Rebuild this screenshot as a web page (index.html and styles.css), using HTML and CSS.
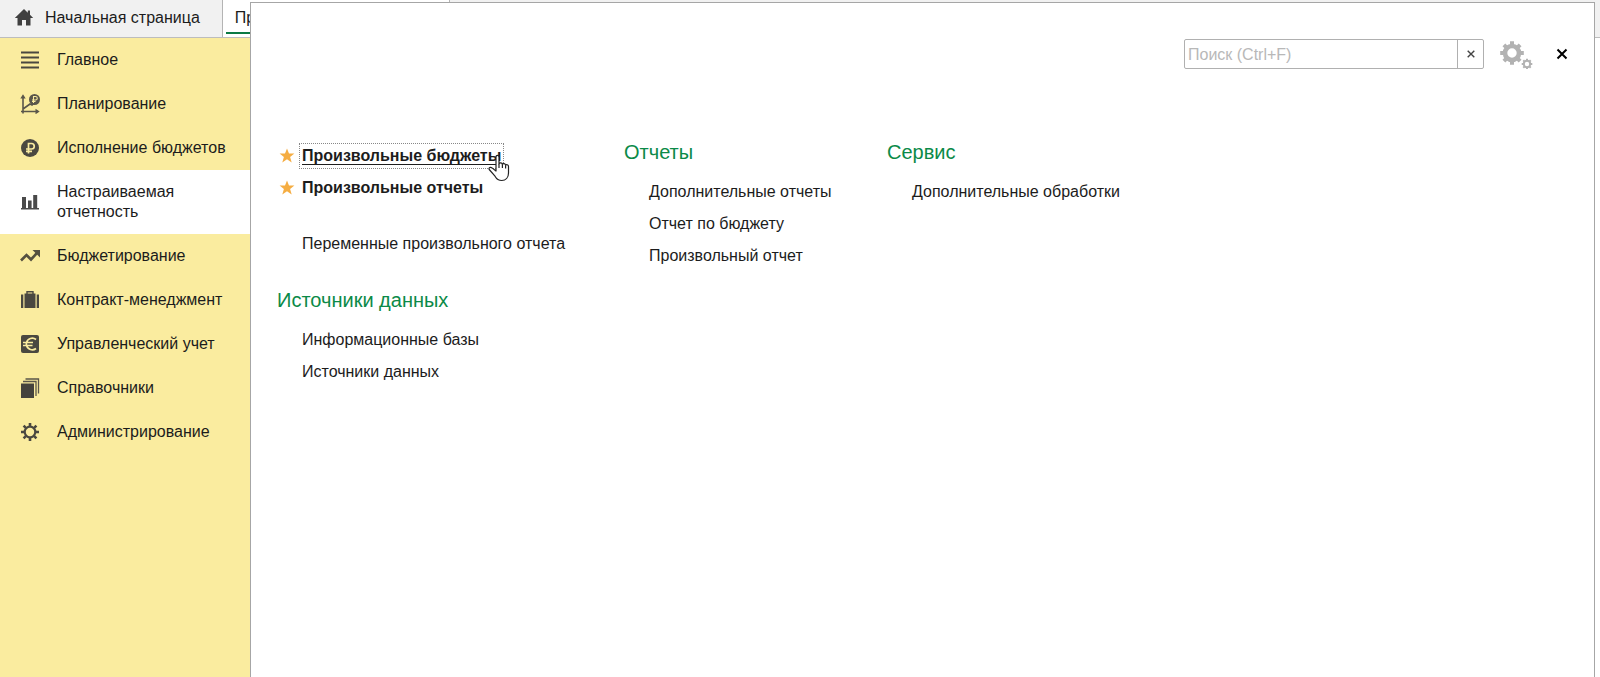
FILE: index.html
```html
<!DOCTYPE html>
<html lang="ru">
<head>
<meta charset="utf-8">
<title>Настраиваемая отчетность</title>
<link rel="stylesheet" href="styles.css">
</head>
<body>
<div class="app">
  <header class="tabs">
    <button class="tab tab-home" type="button">
      <svg class="home-icon" width="20" height="18" viewBox="0 0 20 18" fill="#404040"><path d="M10 0 .8 9h2.700v7.500h4.500V11h4v5.500h4.500V9h2.700L16 5.800V1.500h-2.200v2.300z"/></svg>
      Начальная страница
    </button>
    <button class="tab tab-current" type="button">Пр</button>
  </header>

  <div class="body">
    <nav class="sidebar">
      <a class="section" href="#">
        <svg class="icon" viewBox="0 0 20 20" stroke="#4a4840" stroke-width="2"><path d="M1 2.500h18M1 7.500h18M1 12.500h18M1 17.500h18"/></svg>
        <span>Главное</span>
      </a>
      <a class="section" href="#">
        <svg class="icon" viewBox="0 0 20 20" fill="none" stroke="#5a564a" stroke-width="1.600"><path d="M3 3v14.500h15M1 17.500h2v2M3 15l7-5 2 1 4-4"/><path d="M.3 4.500 3 .3l2.700 4.200zM15.500 14.700l4.200 2.800-4.200 2.800z" fill="#5a564a" stroke="none"/><circle cx="14.500" cy="5.500" r="5.500" fill="#5a564a" stroke="none"/><path d="M13.500 9V2.500h2a1.700 1.700 0 0 1 0 3.500H12M12 7.500h3.500" stroke="#faec9f" stroke-width="1.100"/></svg>
        <span>Планирование</span>
      </a>
      <a class="section" href="#">
        <svg class="icon" viewBox="0 0 20 20" fill="none"><circle cx="10" cy="10" r="9" fill="#4a4840"/><path d="M8.500 15.500V5.500h3a2.700 2.700 0 0 1 0 5.500H6M6 13.300h6" stroke="#faec9f" stroke-width="1.700"/></svg>
        <span>Исполнение бюджетов</span>
      </a>
      <a class="section section-current" href="#" aria-current="page">
        <svg class="icon" viewBox="0 0 20 20" fill="#4a4a4a"><path d="M1 16h18v1.500H1zM2 5h4v11H2zM8 8.500h3.600V16H8zM13.200 3h4v13h-4z"/></svg>
        <span>Настраиваемая отчетность</span>
      </a>
      <a class="section" href="#">
        <svg class="icon" viewBox="0 0 20 20" fill="none"><path d="m1 14.500 5.500-5.500 4.500 4.500 6-6.500" stroke="#55503f" stroke-width="2.600"/><path d="M12.500 4H20v7.500z" fill="#55503f"/></svg>
        <span>Бюджетирование</span>
      </a>
      <a class="section" href="#">
        <svg class="icon" viewBox="0 0 20 20" fill="#4a4840"><path d="M1 4.500h2.300v13.500H1zM16.700 4.500H19v13.500h-2.300zM4.500 3.500h11v14.500h-11z"/><path d="M7 4V1.800h6V4" fill="none" stroke="#4a4840" stroke-width="1.400"/></svg>
        <span>Контракт-менеджмент</span>
      </a>
      <a class="section" href="#">
        <svg class="icon" viewBox="0 0 20 20" fill="none"><rect x="1" y="1" width="18" height="18" rx="2" fill="#4a4840"/><path d="M16 5.500a6 6 0 0 0-9.500 3.200 6 6 0 0 0 0 2.600A6 6 0 0 0 16 14.500M3 8.500h10M3 11.500h9.500" stroke="#faec9f" stroke-width="1.700"/></svg>
        <span>Управленческий учет</span>
      </a>
      <a class="section" href="#">
        <svg class="icon" viewBox="0 0 20 20" fill="none"><path d="M1 5.500h13V20H1z" fill="#45433d"/><path d="M3 3.500h13V18M5.500 1h13v14.500" stroke="#5a564a" stroke-width="1.300"/></svg>
        <span>Справочники</span>
      </a>
      <a class="section" href="#">
        <svg class="icon" viewBox="0 0 20 20" fill="none" stroke="#4a4840"><circle cx="10" cy="10" r="5.300" stroke-width="2.200"/><g stroke-width="2.600"><path d="M10 1v3M10 16v3M1 10h3M16 10h3M3.600 3.600l2.200 2.200M14.200 14.200l2.200 2.200M3.600 16.400l2.200-2.200M14.200 5.800l2.200-2.200"/></g></svg>
        <span>Администрирование</span>
      </a>
    </nav>
    <main class="workspace"></main>
  </div>

  <section class="panel" aria-label="Настраиваемая отчетность">
    <div class="toolbar">
      <div class="search">
        <input class="search-input" type="text" placeholder="Поиск (Ctrl+F)" aria-label="Поиск">
        <button class="search-clear" type="button" aria-label="Очистить"><svg width="8" height="8" viewBox="0 0 8 8" stroke="#444" stroke-width="1.400"><path d="m.7.7 6.600 6.600M7.300.7.7 7.300"/></svg></button>
      </div>
      <button class="tool" type="button" aria-label="Настройки">
        <svg width="34" height="30" viewBox="0 0 34 30" fill="none" stroke="#b2b2b2"><circle cx="12" cy="14" r="7" stroke-width="4.600"/><path d="M12 2.200v4M12 21.800v4M.2 14h4M19.800 14h4M3.900 5.900l3 3M17.100 19.100l3 3M3.900 22.100l3-3M17.100 8.900l3-3" stroke-width="4"/><circle cx="27" cy="25" r="3.200" stroke-width="2"/><path d="M27 19.700v2M27 28.300v2M21.700 25h2M30.300 25h2M23.300 21.300l1.300 1.300M29.400 27.400l1.300 1.300M23.300 28.700l1.300-1.300M29.400 22.600l1.300-1.300" stroke-width="2"/></svg>
      </button>
      <button class="tool" type="button" aria-label="Закрыть"><svg width="12" height="12" viewBox="0 0 12 12" stroke="#000" stroke-width="2"><path d="m1.500 1.500 9 9M10.500 1.500l-9 9"/></svg></button>
    </div>

    <div class="columns">
      <div class="column column-wide">
        <ul class="links favorites">
          <li class="favorite">
            <svg class="star" width="16" height="16" viewBox="0 0 16 16" fill="#f5ad42"><path d="m8 .5 2 5h5.400l-4.300 3.400 1.600 5.600L8 11.200l-4.700 3.300 1.600-5.600L.6 5.500H6z"/></svg>
            <a class="link link-bold link-focus" href="#">Произвольные бюджеты
              <svg class="cursor" width="22" height="28" viewBox="0 0 22 28" fill="#fff" stroke="#222" stroke-width="1.200" stroke-linejoin="round"><path d="M8 17V3.200C8 .8 11 .8 11 3.200V10c.3-1.500 3.200-1.500 3.400.4.500-1.300 3-1 3.200.8.700-1 2.900-.7 2.900 1.300v6.500c0 4.500-2.800 7.500-6.700 7.500-3.500 0-5.300-1.600-6.800-4.300L1.200 15.500c-.8-2 1.300-2.700 2.800-1.600z"/><path d="M11 10v4M14.400 10.400V14M17.600 11.200V14.500" fill="none"/></svg>
            </a>
          </li>
          <li class="favorite">
            <svg class="star" width="16" height="16" viewBox="0 0 16 16" fill="#f5ad42"><path d="m8 .5 2 5h5.400l-4.300 3.400 1.600 5.600L8 11.200l-4.700 3.300 1.600-5.600L.6 5.500H6z"/></svg>
            <a class="link link-bold" href="#">Произвольные отчеты</a>
          </li>
        </ul>
        <ul class="links">
          <li><a class="link" href="#">Переменные произвольного отчета</a></li>
        </ul>
        <div class="group">
          <h2 class="group-title">Источники данных</h2>
          <ul class="links">
            <li><a class="link" href="#">Информационные базы</a></li>
            <li><a class="link" href="#">Источники данных</a></li>
          </ul>
        </div>
      </div>
      <div class="column">
        <h2 class="group-title">Отчеты</h2>
        <ul class="links">
          <li><a class="link" href="#">Дополнительные отчеты</a></li>
          <li><a class="link" href="#">Отчет по бюджету</a></li>
          <li><a class="link" href="#">Произвольный отчет</a></li>
        </ul>
      </div>
      <div class="column">
        <h2 class="group-title">Сервис</h2>
        <ul class="links">
          <li><a class="link" href="#">Дополнительные обработки</a></li>
        </ul>
      </div>
    </div>
  </section>
</div>
</body>
</html>
```
FILE: styles.css
```css
* {
  box-sizing: border-box;
}

body {
  margin: 0;
  background: #fff;
  color: #1c1c1c;
  font: 16px/20px "Liberation Sans", Arial, sans-serif;
}

button,
input {
  font: inherit;
  color: inherit;
}

a {
  color: inherit;
  text-decoration: none;
}

ul,
h2 {
  margin: 0;
  padding: 0;
  list-style: none;
}

.app {
  position: relative;
  display: flex;
  flex-direction: column;
  min-height: 100vh;
}

.tabs {
  display: flex;
  height: 38px;
  background: #f1f1f1;
  border-bottom: 1px solid #bdbdbd;
}

.tab {
  display: flex;
  align-items: center;
  padding: 0 22px 2px 14px;
  border: 0;
  border-right: 1px solid #b4b4b4;
  background: none;
  white-space: nowrap;
}

.home-icon {
  margin-right: 11px;
}

.tab-current {
  width: 227px;
  padding-left: 12px;
  background: linear-gradient(#0b7a44, #0b7a44) 3px 32px / 221px 2px no-repeat #fff;
}

.body {
  flex: 1;
  display: flex;
}

.sidebar {
  width: 250px;
  background: #faec9f;
}

.section {
  display: flex;
  align-items: center;
  gap: 17px;
  min-height: 44px;
  padding: 12px 20px;
}

.section-current {
  min-height: 63px;
  background: #fff;
}

.icon {
  flex: none;
  width: 20px;
  height: 20px;
}

.workspace {
  flex: 1;
}

.panel {
  position: absolute;
  top: 2px;
  right: 5px;
  bottom: 0;
  left: 250px;
  border: 1px solid #a6a6a6;
  border-bottom: 0;
  background: #fff;
}

.toolbar {
  display: flex;
  justify-content: flex-end;
  align-items: center;
  padding: 36px 26px 0 0;
}

.search {
  display: flex;
  width: 300px;
  height: 30px;
  margin-right: 16px;
  border: 1px solid #b0b0b0;
  border-radius: 2px;
}

.search-input {
  flex: 1;
  min-width: 0;
  padding: 1px 3px 0;
  border: 0;
  outline: 0;
  background: none;
}

.search-input::placeholder {
  color: #b8b8b8;
}

.search-clear {
  display: flex;
  justify-content: center;
  align-items: center;
  width: 26px;
  padding: 0;
  border: 0;
  border-left: 1px solid #b0b0b0;
  background: none;
}

.tool {
  display: flex;
  padding: 0;
  border: 0;
  background: none;
}

.tool + .tool {
  margin-left: 22px;
}

.columns {
  display: flex;
  gap: 54px;
  padding: 71px 26px 0;
}

.column {
  min-width: 209px;
}

.column-wide {
  min-width: 293px;
}

.group-title {
  color: #0b8a48;
  font-size: 20px;
  font-weight: 400;
  line-height: 24px;
}

.group-title + .links {
  margin-top: 12px;
}

.links {
  padding-left: 25px;
}

.links li {
  display: flex;
  align-items: center;
  height: 32px;
}

.favorites {
  margin-bottom: 24px;
  padding-left: 2px;
}

.favorite {
  gap: 7px;
}

.link {
  white-space: nowrap;
}

.link-bold {
  font-weight: 700;
}

.link-focus {
  position: relative;
  outline: 1px dotted #888;
  outline-offset: 2px;
  text-decoration: underline;
  text-underline-offset: 3px;
}

.group {
  margin-top: 28px;
}

.cursor {
  position: absolute;
  top: 8px;
  right: -9px;
}
```
